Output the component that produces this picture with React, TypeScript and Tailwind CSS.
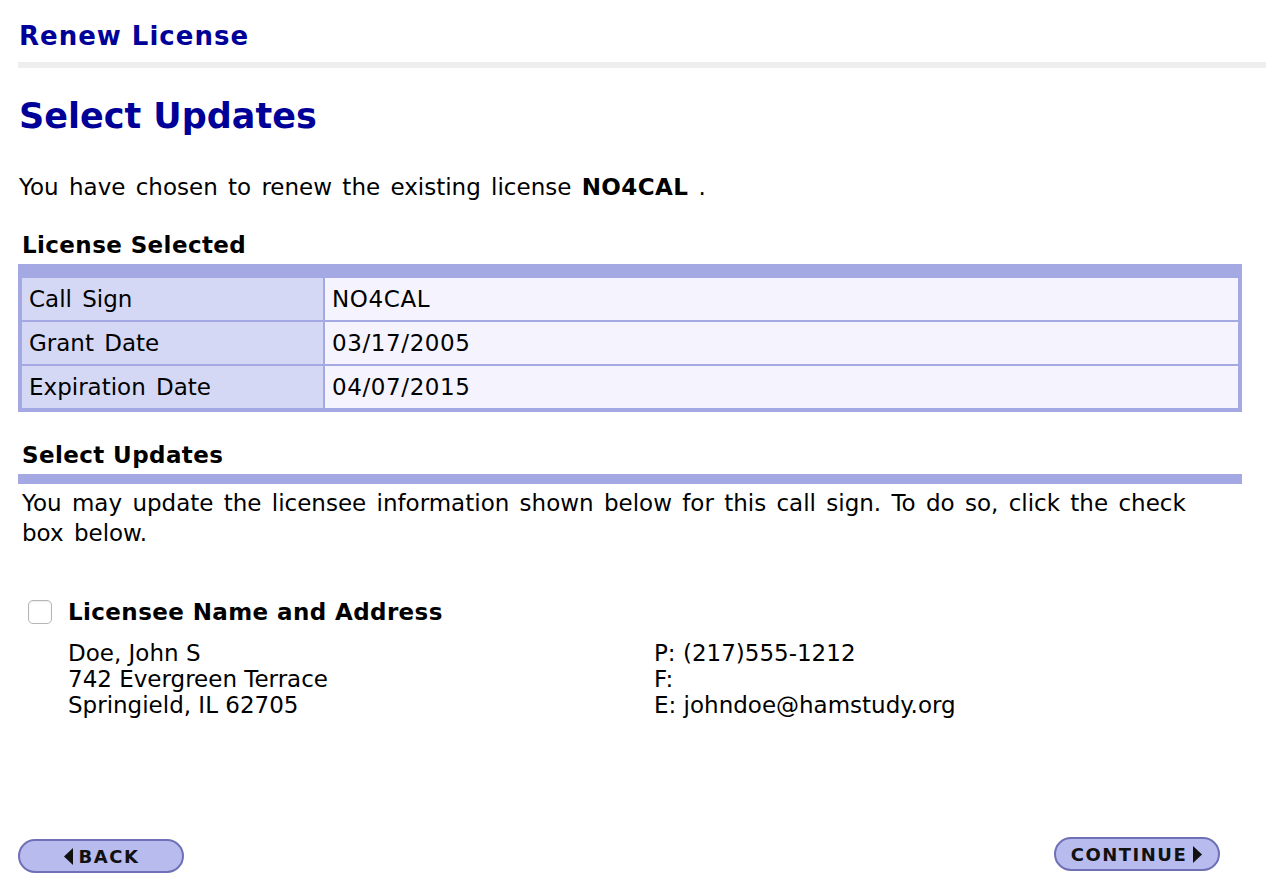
import React from 'react';

const rows = [
  { label: 'Call Sign', value: 'NO4CAL' },
  { label: 'Grant Date', value: '03/17/2005' },
  { label: 'Expiration Date', value: '04/07/2015' },
];

const PillButton: React.FC<{ children: React.ReactNode }> = ({ children }) => (
  <button className="h-[34px] w-[166px] rounded-full border-2 border-[#6f70b6] bg-[#b8bbee] flex items-center justify-center gap-[6px] text-[18px] font-bold text-[#111] tracking-[1.5px] [word-spacing:0px]">
    {children}
  </button>
);

export default function App() {
  return (
    <div className="min-h-[892px] bg-white text-black text-[23px] tracking-normal [word-spacing:3px] overflow-hidden" style={{ fontFamily: '"DejaVu Sans", Verdana, sans-serif' }}>
      <div className="pl-[18px] pr-[24px] pt-[20px]">
        <h2 className="text-[26px] font-bold text-[#000099] leading-[32px] pl-[1px] tracking-[1px] [word-spacing:0px]">Renew License</h2>
        <div className="mt-[10px] h-[6px] bg-[#eeeeee] -mr-[24px]"></div>

        <h1 className="mt-[26px] text-[35px] font-bold text-[#000099] leading-[44px] pl-[1px] [word-spacing:0px]">Select Updates</h1>

        <p className="mt-[35px] leading-[28px] pl-[1px]">
          You have chosen to renew the existing license <b className="tracking-[0.4px]">NO4CAL</b> .
        </p>

        <h3 className="mt-[31px] font-bold leading-[26px] pl-[4px] tracking-[0.4px] [word-spacing:0px]">License Selected</h3>
        <div className="mt-[6px] border-[4px] border-t-[14px] border-[#a4a9e4] bg-[#a4a9e4]">
          <div className="flex flex-col gap-[2px]">
            {rows.map((r) => (
              <div key={r.label} className="flex gap-[2px] h-[42px]">
                <div className="w-[301px] bg-[#d5d8f5] flex items-center pl-[7px]">{r.label}</div>
                <div className="flex-1 bg-[#f5f4fe] flex items-center pl-[7px] tracking-[0.6px]">{r.value}</div>
              </div>
            ))}
          </div>
        </div>

        <h3 className="mt-[30px] font-bold leading-[26px] pl-[4px] tracking-[0.4px] [word-spacing:0px]">Select Updates</h3>
        <div className="mt-[6px] h-[10px] bg-[#a4a9e4]"></div>
        <p className="mt-[4px] leading-[30px] pl-[4px]">
          You may update the licensee information shown below for this call sign. To do so, click the check
          <br />
          box below.
        </p>

        <div className="mt-[50px] pl-[10px]">
          <label className="flex items-center gap-[16px]">
            <span className="w-[24px] h-[24px] rounded-[5px] border border-[#b5b5b5] bg-white shadow-[inset_0_1px_2px_rgba(0,0,0,0.08)]"></span>
            <span className="font-bold leading-[28px] tracking-[0.4px] [word-spacing:0px]">Licensee Name and Address</span>
          </label>
          <div className="mt-[14px] pl-[40px] grid grid-cols-[586px_1fr] leading-[26px] [word-spacing:0px]">
            <div>
              <div>Doe, John S</div>
              <div>742 Evergreen Terrace</div>
              <div>Springield, IL 62705</div>
            </div>
            <div>
              <div>P: (217)555-1212</div>
              <div>F:</div>
              <div>E: johndoe@hamstudy.org</div>
            </div>
          </div>
        </div>

        <div className="mt-[119px] flex justify-between items-start pr-[22px]">
          <div className="mt-[2px]">
            <PillButton>
              <svg width="10" height="17" viewBox="0 0 10 17"><path d="M10 0 L1 8.5 L10 17 Z" fill="#111" /></svg>
              BACK
            </PillButton>
          </div>
          <PillButton>
            CONTINUE
            <svg width="10" height="17" viewBox="0 0 10 17"><path d="M0 0 L9 8.5 L0 17 Z" fill="#111" /></svg>
          </PillButton>
        </div>
      </div>
    </div>
  );
}
